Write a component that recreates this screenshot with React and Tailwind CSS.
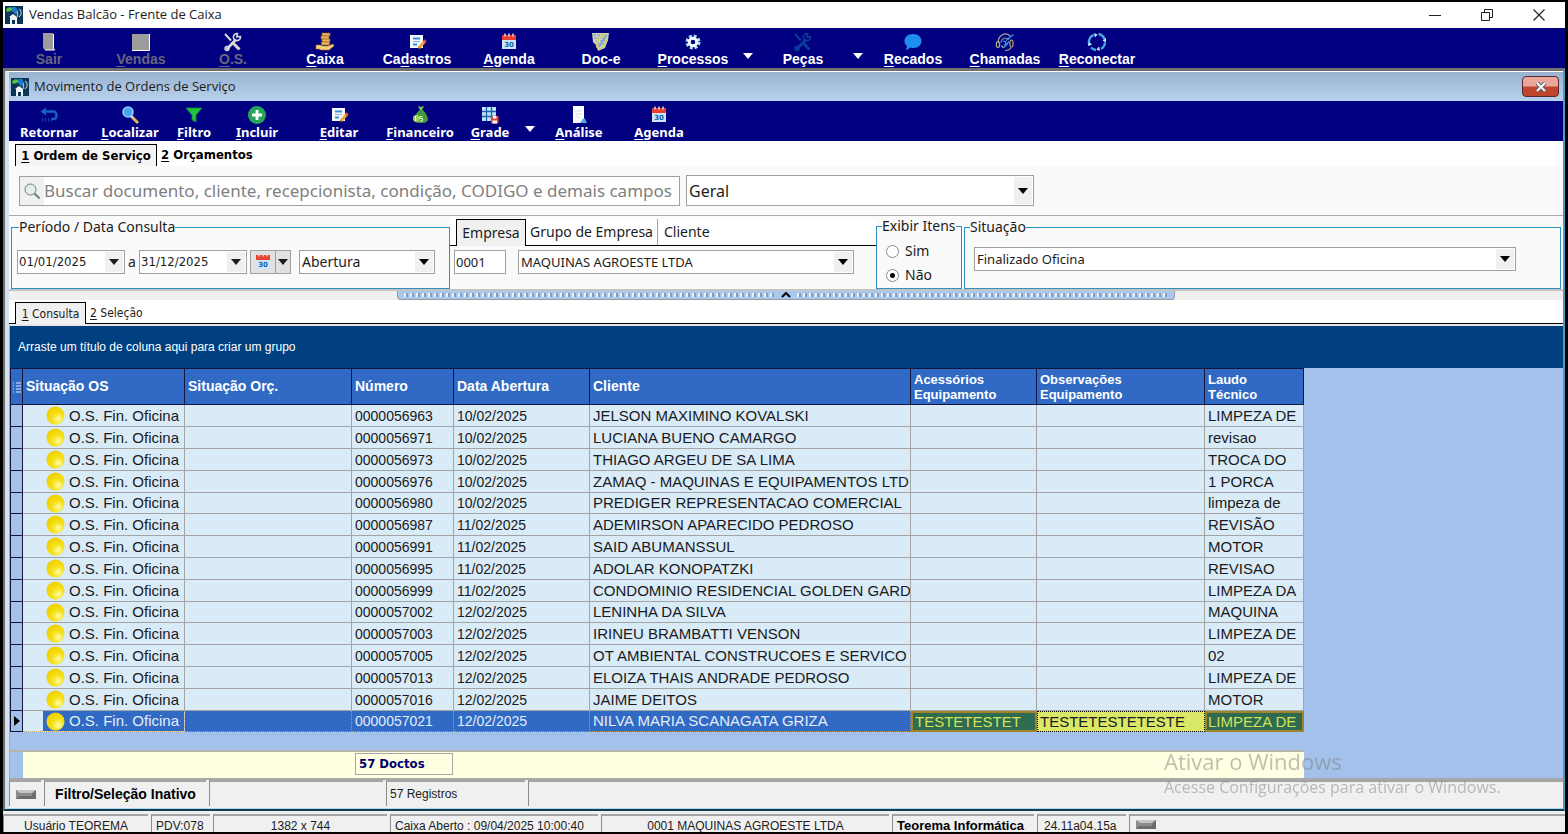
import { Fragment } from "react";

const navButtons = [
  { label: "Sair", icon: "door", width: "w-[92px]", disabled: true },
  { label: "&Vendas", icon: "board", width: "w-[92px]", disabled: true },
  { label: "&O.S.", icon: "toolsGray", width: "w-[92px]", disabled: true },
  { label: "&Caixa", icon: "coins", width: "w-[92px]" },
  { label: "Ca&dastros", icon: "edit", width: "w-[92px]" },
  { label: "&Agenda", icon: "calendar", width: "w-[92px]" },
  { label: "Doc-e", icon: "doc", width: "w-[92px]" },
  { label: "&Processos", icon: "gear", width: "w-[92px]", menu: true },
  { label: "Peças", icon: "toolsBlue", width: "w-[92px]", menu: true },
  { label: "&Recados", icon: "balloon", width: "w-[92px]" },
  { label: "&Chamadas", icon: "headset", width: "w-[92px]" },
  { label: "&Reconectar", icon: "sync", width: "w-[92px]" },
];

const orderButtons = [
  { label: "Retornar", icon: "back", width: "w-[80px]" },
  { label: "&Localizar", icon: "search", width: "w-[82px]" },
  { label: "&Filtro", icon: "filter", width: "w-[46px]" },
  { label: "&Incluir", icon: "plus", width: "w-[80px]" },
  { label: "&Editar", icon: "edit", width: "w-[84px]" },
  { label: "&Financeiro", icon: "money", width: "w-[78px]" },
  { label: "&Grade", icon: "grid", width: "w-[62px]", menu: true },
  { label: "&Análise", icon: "report", width: "w-[80px]" },
  { label: "&Agenda", icon: "calendar", width: "w-[80px]" },
];

const orders = [
  ["0000056963", "10/02/2025", "JELSON MAXIMINO KOVALSKI", "LIMPEZA DE"],
  ["0000056971", "10/02/2025", "LUCIANA BUENO CAMARGO", "revisao"],
  ["0000056973", "10/02/2025", "THIAGO ARGEU DE SA LIMA", "TROCA DO"],
  ["0000056976", "10/02/2025", "ZAMAQ - MAQUINAS E EQUIPAMENTOS LTD", "1 PORCA"],
  ["0000056980", "10/02/2025", "PREDIGER REPRESENTACAO COMERCIAL", "limpeza de"],
  ["0000056987", "11/02/2025", "ADEMIRSON APARECIDO PEDROSO", "REVISÃO"],
  ["0000056991", "11/02/2025", "SAID ABUMANSSUL", "MOTOR"],
  ["0000056995", "11/02/2025", "ADOLAR KONOPATZKI", "REVISAO"],
  ["0000056999", "11/02/2025", "CONDOMINIO RESIDENCIAL GOLDEN GARD", "LIMPEZA DA"],
  ["0000057002", "12/02/2025", "LENINHA DA SILVA", "MAQUINA"],
  ["0000057003", "12/02/2025", "IRINEU BRAMBATTI VENSON", "LIMPEZA DE"],
  ["0000057005", "12/02/2025", "OT AMBIENTAL CONSTRUCOES E SERVICO", "02"],
  ["0000057013", "12/02/2025", "ELOIZA THAIS ANDRADE PEDROSO", "LIMPEZA DE"],
  ["0000057016", "12/02/2025", "JAIME DEITOS", "MOTOR"],
  ["0000057021", "12/02/2025", "NILVA MARIA SCANAGATA GRIZA", "LIMPEZA DE"],
];

const tahoma = "font-['DejaVu_Sans_Condensed','DejaVu_Sans',sans-serif]";
const segoe = "font-['Open_Sans','Noto_Sans',sans-serif]";
const noto = "font-['Noto_Sans','Open_Sans',sans-serif]";
const msSans = "font-['Liberation_Sans',Arial,sans-serif]";

const tools = (
  <>
    <path d="M2 2 L8 8.5" strokeWidth="2" />
    <path d="M9 10 L16.5 17.5" strokeWidth="3" />
    <path d="M3.5 17.5 L13 7.5" strokeWidth="2.6" />
    <path d="M17.5 4.5 A3.6 3.6 0 1 1 14.5 1.5 L13.8 4.8 Z" strokeWidth="1.6" />
    <circle cx="4" cy="16.5" r="2" strokeWidth="1.4" />
  </>
);

const icons = {
  door: (
    <>
      <path d="M4 1h10v15l2 2H6l-2-2z" fill="#9c9c9c" />
      <path d="M14.500 2v14.500l1 1.500H6" stroke="#fff" fill="none" />
    </>
  ),
  board: (
    <>
      <rect x="1" y="2" width="17" height="16" fill="#9c9c9c" />
      <path d="M18.500 2v16.500H1" stroke="#fff" fill="none" />
    </>
  ),
  toolsGray: (
    <g stroke="#d8d8d8" fill="none">
      {tools}
    </g>
  ),
  toolsBlue: (
    <g stroke="#0a3c98" fill="none">
      {tools}
    </g>
  ),
  coins: (
    <>
      <g fill="#f2b45e" stroke="#8a5a1c" strokeWidth=".6">
        <rect x="7" y="1" width="8" height="3" />
        <rect x="6" y="4" width="8" height="3" />
        <rect x="7" y="7" width="8" height="3" />
        <rect x="6.500" y="10" width="8" height="3" />
      </g>
      <path
        d="M1 13h4l3 1h5l5-2 1 2-5 4H6l-2-1H1z"
        fill="#f7cf7a"
        stroke="#a87728"
        strokeWidth=".6"
      />
    </>
  ),
  edit: (
    <>
      <rect x="3" y="3" width="13" height="13" fill="#f4f8fd" />
      <path d="M6 6.500h7M6 12.500h4" stroke="#2c8fe0" strokeWidth="2" />
      <path d="M6 9.500h7" stroke="#8fb4dc" />
      <path d="M17.500 9.500 L12 16" stroke="#f0a63a" strokeWidth="3" />
      <path d="M11 17.500l.5-2.500 2 1.500z" fill="#5b4a3a" />
      <path d="M18.500 8.300 l-1.500 1.800" stroke="#e2574c" strokeWidth="3" />
    </>
  ),
  calendar: (
    <>
      <rect x="3" y="3" width="14" height="14" fill="#cfe6fa" />
      <rect x="3" y="3" width="14" height="5" fill="#e8412f" />
      <path d="M6 1.500v3M10 1.500v3M14 1.500v3" stroke="#d9d9d9" strokeWidth="1.500" />
      <text
        x="10"
        y="14.500"
        textAnchor="middle"
        fontSize="7"
        fontWeight="bold"
        fontFamily="DejaVu Sans, sans-serif"
        fill="#0b5fae"
      >
        30
      </text>
    </>
  ),
  doc: (
    <>
      <path d="M1 1h17l-1 7-3 8-7 3-1-5-4-4z" fill="#c9d2c4" />
      <path d="M2 3h14M3 6h12M5 9h9M6.500 12h7" stroke="#8498a4" strokeDasharray="3 1" />
      <ellipse
        cx="11"
        cy="9.500"
        rx="4"
        ry="8"
        transform="rotate(32 11 9.500)"
        fill="none"
        stroke="#d8cf62"
        strokeWidth="1.500"
      />
      <path d="M15.500 3 L8 15" stroke="#6fa9dc" strokeWidth="1.600" />
    </>
  ),
  gear: (
    <>
      <circle cx="10" cy="10" r="5.500" fill="none" stroke="#aee2f2" strokeWidth="4" strokeDasharray="2.600 1.720" />
      <circle cx="10" cy="10" r="3.800" fill="none" stroke="#f2fdff" strokeWidth="3" />
    </>
  ),
  balloon: (
    <path d="M10 2c5 0 8.500 2.800 8.500 7s-3.500 7-8 7c-1 0-2 0-3-.5L3 18.500l1-4.500C2.500 13 1.500 11 1.500 9 1.500 4.800 5 2 10 2z" fill="#1e8ff0" />
  ),
  headset: (
    <g fill="none" strokeWidth="1.200">
      <path d="M3.500 11a7 7.500 0 0 1 12-6.500" stroke="#a8a69a" />
      <path d="M6 11a4.500 5 0 0 1 8-3" stroke="#6b7690" />
      <ellipse cx="3" cy="12.500" rx="1.600" ry="3" stroke="#b9b18a" />
      <ellipse cx="16.500" cy="11.500" rx="1.600" ry="3.500" stroke="#b9a56a" />
      <path d="M16 15.500c-1 2-3 3-6 3" stroke="#a9a07a" />
      <path d="M18.500 2.500 L11 8.500M8 9l3 1-1 3 3-1M9 15.500l5-6" stroke="#3f9fdb" />
      <path d="M6.500 13.500l2 2.500" stroke="#c8c8b0" />
    </g>
  ),
  sync: (
    <g fill="none" strokeWidth="2.400">
      <path d="M2.600 13.500a8 8 0 0 1 4-10.600" stroke="#4aa6e4" />
      <path d="M11.500 2a8 8 0 0 1 6 5" stroke="#4aa6e4" />
      <path d="M18 10.500a8 8 0 0 1-4 6.400" stroke="#4aa6e4" />
      <path d="M9 18a8 8 0 0 1-5-2.500" stroke="#4aa6e4" />
      <path d="M7 1l3.500 1.500-2.500 3z" fill="#c9ecff" />
      <path d="M19 6v4.500l-3.500-2z" fill="#c9ecff" />
      <path d="M13 19l-3.500-1.500 2.500-3z" fill="#c9ecff" />
      <path d="M1 14l1-4 3 2.500z" fill="#c9ecff" />
    </g>
  ),
  back: (
    <>
      <path d="M4.500 6.500h9.500c2.500 0 3.500 2 3.500 4s-1 3.500-3.500 3.500h-2" fill="none" stroke="#1463bd" strokeWidth="2.400" />
      <path d="M7 2.500v8L1.500 6.500z" fill="#1463bd" />
      <path d="M3.500 13v3.500M6.500 13v3.500M9.500 13v3.500M12.500 13v3.500" stroke="#0c4aa0" strokeWidth="1.200" />
    </>
  ),
  search: (
    <>
      <path d="M11.500 11.500 L18 18" stroke="#e0b36a" strokeWidth="3" />
      <path d="M10.500 10.500l2 2" stroke="#cfd6dd" strokeWidth="2.500" />
      <circle cx="8" cy="7" r="5" fill="#4aa3f2" stroke="#8ecbff" strokeWidth="1.600" />
    </>
  ),
  filter: <path d="M2 3h16l-6 7v7l-4-2v-5z" fill="#1fc43a" stroke="#0c8a3c" strokeWidth=".8" />,
  plus: (
    <>
      <circle cx="10" cy="10" r="9" fill="#27a45a" />
      <path d="M10 5v10M5 10h10" stroke="#fff" strokeWidth="2.800" />
    </>
  ),
  money: (
    <>
      <path d="M8 1l2.500 1L14 1l-2 4h-2z" fill="#7cc34a" />
      <path d="M10 5h3c3 3 5 7 5 9 0 2.500-2 4-7 4s-7-1.500-7-4c0-3 3-7 6-9z" fill="#3f9b3a" />
      <ellipse cx="6.500" cy="13.500" rx="3.500" ry="3.500" fill="#9bcf5c" />
      <path d="M5.500 11v5M12.500 11.500H10v2h2.500v2.500H10M4 11.500h1.500" stroke="#e9f6c8" fill="none" />
    </>
  ),
  grid: (
    <>
      <rect x="2" y="2" width="14" height="14" fill="#bfe4fb" />
      <path d="M2 6.500h14M2 11.500h14M6.500 2v14M11.500 2v14" stroke="#1c62ad" strokeWidth="1.300" />
      <path d="M11 11h7.500v7.500H11z" fill="#e0402c" />
      <path d="M13 11h3.500v2.500H13zM12.500 15.500h4.500v3h-4.500z" fill="#fff" />
    </>
  ),
  report: (
    <>
      <path d="M4 1h11v17H4z" fill="#fff" />
      <path d="M6 6h7M6 9h7M6 12h5" stroke="#d5dde6" />
      <path d="M11 18l2.500-4 2-1 2.500 5z" fill="#59a9e0" />
    </>
  ),
};

function Icon({ name, className = "size-5" }) {
  return (
    <svg viewBox="0 0 20 20" className={className} aria-hidden="true">
      {icons[name]}
    </svg>
  );
}

function AppLogo() {
  return (
    <svg viewBox="0 0 18 18" className="size-[18px] shrink-0" aria-hidden="true">
      <rect width="18" height="18" fill="#0b3556" />
      <path d="M1 3l4-2 3 2-2 2-4 1z" fill="#5ac43a" />
      <path d="M7 1h4l2 4-2 4-4-4z" fill="#1f7ac8" />
      <path d="M4 11l4-3 4 3v7h-2v-4H7v4H5v-7z" fill="#eef3f7" />
      <path d="M14 3c3 1.500 3 6 0 8M12.500 5v6" stroke="#9db8cc" strokeWidth="1.300" fill="none" />
    </svg>
  );
}

// "&" marks the shortcut letter
function Accel({ text }) {
  const at = text.indexOf("&");
  if (at < 0) return text;
  return (
    <>
      {text.slice(0, at)}
      <span className="underline underline-offset-2">{text[at + 1]}</span>
      {text.slice(at + 2)}
    </>
  );
}

function Caret({ className = "" }) {
  return (
    <svg viewBox="0 0 10 6" className={`h-1.5 w-2.5 ${className}`} aria-hidden="true">
      <path d="M0 0h10L5 6z" fill="currentColor" />
    </svg>
  );
}

function Toolbar({ items, label, className }) {
  return (
    <nav aria-label={label} className={`flex h-10 shrink-0 bg-[#000080] font-bold text-white ${className}`}>
      {items.map((item) => (
        <Fragment key={item.label}>
          <button
            type="button"
            disabled={item.disabled}
            className={`flex shrink-0 flex-col items-center pt-1 leading-4 whitespace-nowrap disabled:text-[#66667e] ${item.width}`}
          >
            <Icon name={item.icon} />
            <span className="-mt-px">
              <Accel text={item.label} />
            </span>
          </button>
          {item.menu && (
            <button type="button" aria-label={`Mais ${item.label.replace("&", "")}`} className="flex w-[18px] shrink-0 items-center justify-center pt-5">
              <Caret className="mb-1" />
            </button>
          )}
        </Fragment>
      ))}
    </nav>
  );
}

function Combo({ label, value, className }) {
  return (
    <div className={`relative border border-[#a0a0a0] bg-white text-[#1c1c1c] ${className}`}>
      <select aria-label={label} defaultValue={value} className="block size-full appearance-none truncate pl-0.5 outline-none">
        <option>{value}</option>
      </select>
      <span className="pointer-events-none absolute inset-y-px right-px flex w-[18px] items-center justify-center bg-[#f0f0f0] text-black">
        <Caret />
      </span>
    </div>
  );
}

function DateField({ label, value }) {
  return (
    <div className="flex h-6 w-[108px] border border-[#a0a0a0] bg-white p-px">
      <input aria-label={label} defaultValue={value} className={`min-w-0 flex-1 text-[13px] outline-none ${tahoma}`} />
      <button type="button" aria-label={`Abrir ${label}`} className="flex w-[18px] items-center justify-center bg-[#f0f0f0]">
        <Caret />
      </button>
    </div>
  );
}

function Ball() {
  return (
    <svg viewBox="0 0 20 20" className="size-[19px] shrink-0" aria-hidden="true">
      <defs>
        <radialGradient id="ball" cx=".65" cy=".7" r=".7">
          <stop offset="0" stopColor="#fffbb0" />
          <stop offset=".45" stopColor="#f6e21a" />
          <stop offset="1" stopColor="#f0cf00" />
        </radialGradient>
      </defs>
      <circle cx="10" cy="10" r="9.500" fill="url(#ball)" />
    </svg>
  );
}

function FilterPanel() {
  return (
    <section className={`flex h-[74px] border-t border-[#a8a8a8] bg-[#fafafa] pt-[3px] pl-0.5 text-sm text-[#1c1c1c] ${noto}`}>
      <fieldset className="h-[70px] w-[439px] shrink-0 border border-[#2f8fc0] pl-[5px]">
        <legend className="ml-0.5 leading-4">Período / Data Consulta</legend>
        <div className="flex items-center pt-[15px]">
          <DateField label="Data inicial" value="01/01/2025" />
          <span className="w-3.5 text-center">a</span>
          <DateField label="Data final" value="31/12/2025" />
          <div className="ml-[3px] flex h-6 w-[41px] border border-[#a0a0a0] bg-[#e1e1e1]">
            <button type="button" aria-label="Calendário" className="flex flex-1 items-center justify-center border-r border-[#a0a0a0]">
              <Icon name="calendar" />
            </button>
            <button type="button" aria-label="Opções de período" className="flex w-3.5 items-center justify-center">
              <Caret className="w-2" />
            </button>
          </div>
          <Combo label="Tipo de data" value="Abertura" className="ml-2 h-6 w-[136px]" />
        </div>
      </fieldset>

      <div className="flex w-[426px] shrink-0 flex-col">
        <div role="tablist" className="flex h-[27px] shrink-0 border-b border-black bg-white pl-1.5">
          <button type="button" role="tab" aria-selected="true" className="-mb-px w-[70px] border border-b-0 border-black bg-[#f0f0f0]">
            Empresa
          </button>
          <button type="button" role="tab" className="w-[132px] border-r border-[#a0a0a0]">
            Grupo de Empresa
          </button>
          <button type="button" role="tab" className="px-1.5">
            Cliente
          </button>
        </div>
        <div className={`flex gap-3 pt-1 pl-1 text-[13px] ${noto}`}>
          <input aria-label="Código da empresa" defaultValue="0001" className="h-6 w-[52px] border border-[#a0a0a0] bg-white pl-px outline-none" />
          <Combo label="Empresa" value="MAQUINAS AGROESTE LTDA" className="h-6 w-[336px]" />
        </div>
      </div>

      <fieldset className="h-[70px] w-[86px] shrink-0 border border-[#2f8fc0] pl-[9px]">
        <legend className="-ml-1 leading-[14px] whitespace-nowrap">Exibir Itens</legend>
        <div className="flex flex-col gap-1 pt-2">
          {["Sim", "Não"].map((option) => (
            <label key={option} className="flex items-center gap-1.5 leading-5">
              <input
                type="radio"
                name="exibir"
                defaultChecked={option === "Não"}
                className="size-[13px] appearance-none rounded-full border border-[#8a8a8a] bg-white checked:bg-[radial-gradient(circle,#000_0_2px,#fff_3px)]"
              />
              {option}
            </label>
          ))}
        </div>
      </fieldset>

      <fieldset className="mr-0.5 ml-0.5 h-[70px] min-w-0 flex-1 border border-[#2f8fc0] pl-[9px]">
        <legend className="-ml-1 leading-4">Situação</legend>
        <Combo label="Situação" value="Finalizado Oficina" className={`mt-3 mr-11 h-6 text-[13px] ${noto}`} />
      </fieldset>
    </section>
  );
}

function Splitter() {
  return (
    <div className="flex h-[11px] shrink-0 justify-center border-t-2 border-[#c4c4c4] bg-[#f0f0f0]">
      <div className="flex w-[778px] rounded-b border border-t-0 border-[#9a9a9a] bg-[#a8c8ee]">
        <div className="my-0.5 ml-1.5 flex-1 bg-[repeating-linear-gradient(90deg,#e8f2fc_0_2px,#8a9db4_2px_4px,#a8c8ee_4px_6px)]" />
        <button type="button" aria-label="Recolher filtros" className="flex w-[22px] items-center justify-center">
          <svg viewBox="0 0 10 6" className="h-1.5 w-2.5" aria-hidden="true">
            <path d="M1 5l4-4 4 4" fill="none" stroke="#000" strokeWidth="2" />
          </svg>
        </button>
        <div className="my-0.5 mr-1.5 flex-1 bg-[repeating-linear-gradient(90deg,#e8f2fc_0_2px,#8a9db4_2px_4px,#a8c8ee_4px_6px)]" />
      </div>
    </div>
  );
}

const headCell = "border-r border-b border-[#14143c] px-[3px] text-left align-middle leading-[15px]";

function OrdersTable() {
  return (
    <table className={`w-[1294px] table-fixed border-separate border-spacing-0 bg-[#d9ebf7] ${msSans}`}>
      <colgroup>
        <col className="w-[13px]" />
        <col className="w-[162px]" />
        <col className="w-[167px]" />
        <col className="w-[102px]" />
        <col className="w-[136px]" />
        <col className="w-[321px]" />
        <col className="w-[126px]" />
        <col className="w-[168px]" />
        <col className="w-[99px]" />
      </colgroup>
      <thead>
        <tr className="h-[37px] bg-[#316ac5] text-sm font-bold text-white">
          <th aria-label="Indicador" className="border border-[#14143c] p-0">
            <svg viewBox="0 0 12 12" className="mx-auto size-3" aria-hidden="true">
              <path d="M2 2h1M2 5h1M2 8h1M2 11h1M5 2h5M5 5h5M5 8h5M5 11h5" stroke="#d9ebf7" />
            </svg>
          </th>
          {["Situação OS", "Situação Orç.", "Número", "Data Abertura", "Cliente"].map((title) => (
            <th key={title} className={`border-t ${headCell}`}>
              {title}
            </th>
          ))}
          {[
            ["Acessórios", "Equipamento"],
            ["Observações", "Equipamento"],
            ["Laudo", "Técnico"],
          ].map(([first, second]) => (
            <th key={first} className={`border-t text-[13px] ${headCell}`}>
              {first}
              <br />
              {second}
            </th>
          ))}
        </tr>
      </thead>
      <tbody>
        {orders.map(([number, date, client, report], i) => {
          const selected = i === orders.length - 1;
          const cell = `border-r border-b overflow-hidden whitespace-nowrap p-0 pl-[3px] ${
            selected ? "border-[#c0a060] border-dotted bg-[#316ac5] text-[#e4edf8]" : "border-[#a4a4a4]"
          }`;
          return (
            <tr key={number} className={`text-[15px] leading-5 text-[#1a1a22] ${i % 5 === 4 ? "h-[21px]" : "h-[22px]"}`}>
              <td className="border border-t-0 border-[#14143c] bg-[#a3c1ea] p-0">
                {selected && (
                  <svg viewBox="0 0 6 10" className="mx-auto h-2.5 w-1.5" aria-hidden="true">
                    <path d="M0 0v10l6-5z" />
                  </svg>
                )}
              </td>
              <td className={`border-r border-b p-0 ${selected ? "border-[#c0a060] border-dotted text-[#e4edf8]" : "border-[#a4a4a4]"}`}>
                <div className={`ml-5 flex h-5 items-center gap-1 overflow-hidden pl-[3px] whitespace-nowrap ${selected ? "bg-[#316ac5]" : ""}`}>
                  <Ball />
                  O.S. Fin. Oficina
                </div>
              </td>
              <td className={cell}></td>
              <td className={`text-sm ${cell}`}>{number}</td>
              <td className={`text-sm ${cell}`}>{date}</td>
              <td className={cell}>{client}</td>
              {selected ? (
                <>
                  <td className="overflow-hidden border-2 border-[#a08428] bg-[#2f6b50] p-0 pl-0.5 leading-[17px] whitespace-nowrap text-[#d4e25a]">TESTETESTET</td>
                  <td className="overflow-hidden border border-dotted border-black bg-[#dbe766] p-0 pl-0.5 leading-[17px] whitespace-nowrap">TESTETESTETESTE</td>
                  <td className="overflow-hidden border-2 border-[#a08428] bg-[#2f6b50] p-0 pl-px leading-[17px] whitespace-nowrap text-[#d4e25a]">{report}</td>
                </>
              ) : (
                <>
                  <td className={cell}></td>
                  <td className={cell}></td>
                  <td className={cell}>{report}</td>
                </>
              )}
            </tr>
          );
        })}
      </tbody>
    </table>
  );
}

const panel = "shrink-0 border-t-2 border-l border-t-[#a4a4a4] border-l-[#8c8c8c] whitespace-nowrap";

function Led() {
  return (
    <svg viewBox="0 0 20 9" className="h-[9px] w-5" aria-hidden="true">
      <path d="M0 0h20v9H0z" fill="#8c8c8c" />
      <path d="M0 0h20l-4 3H4z" fill="#c4c4c4" />
      <path d="M0 9h20V0l-4 4v2H3z" fill="#6c6c6c" />
    </svg>
  );
}

export default function App() {
  return (
    <div className="flex h-screen min-h-[600px] flex-col overflow-hidden border-x-[3px] border-y-2 border-black bg-[#f0f0f0]">
      <header className={`flex h-[26px] shrink-0 items-center bg-white pl-0.5 text-[13px] text-[#1c1c1c] ${segoe}`}>
        <AppLogo />
        <h1 className="ml-1.5 flex-1">Vendas Balcão - Frente de Caixa</h1>
        <button type="button" aria-label="Minimizar" className="flex w-[52px] justify-center">
          <svg viewBox="0 0 12 12" className="size-3">
            <path d="M0 6.500h12" stroke="#222" />
          </svg>
        </button>
        <button type="button" aria-label="Restaurar" className="flex w-[52px] justify-center">
          <svg viewBox="0 0 12 12" className="size-3" fill="none" stroke="#222">
            <path d="M.5 3.500h8v8h-8zM3.500 3.500v-3h8v8h-3" />
          </svg>
        </button>
        <button type="button" aria-label="Fechar" className="flex w-[52px] justify-center">
          <svg viewBox="0 0 12 12" className="size-3" stroke="#222" strokeWidth="1.200">
            <path d="M.5.5l11 11M11.500.5l-11 11" />
          </svg>
        </button>
      </header>

      <Toolbar items={navButtons} label="Menu principal" className={`text-sm ${msSans}`} />

      <main className="flex min-h-0 flex-1 flex-col border-t-[3px] border-r-2 border-b-2 border-l-2 border-t-[#707070] border-r-[#4a9cc4] border-b-[#123c50] border-l-[#707070]">
        <div className="flex min-h-0 flex-1 flex-col border-t border-b border-l-4 border-t-white border-b-[#a8dcec] border-l-[#d4e2f2]">
          <div className={`flex h-[29px] shrink-0 items-center bg-linear-to-b from-[#98b2d0] to-[#b9d1ec] pr-1 pl-0.5 text-[13px] text-[#1c1c1c] ${segoe}`}>
            <AppLogo />
            <h2 className="ml-[5px] flex-1">Movimento de Ordens de Serviço</h2>
            <button
              type="button"
              aria-label="Fechar janela"
              className="flex h-[21px] w-[37px] items-center justify-center rounded-sm border border-[#5a2a34] bg-linear-to-b from-[#eaa79c] from-45% to-[#c0452e] to-55%"
            >
              <svg viewBox="0 0 12 10" className="h-2.5 w-3">
                <path d="M2 1l8 8M10 1l-8 8" stroke="#5a5060" strokeWidth="4" />
                <path d="M2 1l8 8M10 1l-8 8" stroke="#f4f4f4" strokeWidth="2.400" />
              </svg>
            </button>
          </div>

          <Toolbar items={orderButtons} label="Ordens de serviço" className={`text-[13px] ${noto}`} />

          <div role="tablist" className={`flex h-[25px] shrink-0 bg-white pt-[3px] pl-1.5 text-[13px] font-bold text-black ${tahoma}`}>
            <button type="button" role="tab" aria-selected="true" className="w-[142px] border border-b-0 border-black bg-[#f4f4f4]">
              <Accel text="&1 Ordem de Serviço" />
            </button>
            <button type="button" role="tab" className="px-1">
              <Accel text="&2 Orçamentos" />
            </button>
          </div>

          <div className={`flex h-[49px] shrink-0 items-center gap-1.5 bg-[#fafafa] pl-2.5 ${noto}`}>
            <label className="flex h-[30px] w-[661px] items-center border border-[#a0a0a0] bg-white">
              <span className="flex h-full w-6 items-center justify-center bg-[#f0f0f0]">
                <svg viewBox="0 0 16 16" className="size-4" fill="none" stroke="#6c7c7c" aria-hidden="true">
                  <circle cx="6.500" cy="6.500" r="5.500" fill="#e4eeee" />
                  <path d="M10.500 10.500l5 5" strokeWidth="2" />
                </svg>
              </span>
              <input
                aria-label="Buscar"
                placeholder="Buscar documento, cliente, recepcionista, condição, CODIGO e demais campos"
                className="min-w-0 flex-1 text-[17px] outline-none placeholder:text-[#808080]"
              />
            </label>
            <Combo label="Filtro da busca" value="Geral" className="h-[31px] w-[348px] text-base" />
          </div>

          <FilterPanel />
          <Splitter />

          <div role="tablist" className={`flex h-6 shrink-0 border-b border-black bg-white pt-0.5 pl-1.5 text-xs text-[#1c1c1c] ${tahoma}`}>
            <button type="button" role="tab" aria-selected="true" className="-mb-px w-[71px] border border-b-0 border-black bg-[#f0f0f0]">
              <Accel text="&1 Consulta" />
            </button>
            <button type="button" role="tab" className="px-1">
              <Accel text="&2 Seleção" />
            </button>
          </div>

          <div className="flex min-h-0 flex-1 flex-col border-t-2 border-b-2 border-l border-t-[#e4e8ec] border-b-[#a8a8a8] border-l-[#a8a8a8] bg-[#a3c1ea]">
            <p className={`flex h-[42px] shrink-0 items-center bg-[#004080] pl-2 text-xs text-white ${msSans}`}>
              Arraste um título de coluna aqui para criar um grupo
            </p>
            <OrdersTable />
            <div className="flex-1" />
            <div className="flex h-7 w-[1294px] shrink-0 border-t-2 border-[#b4b4a8] bg-[#ffffe1] text-[#000070]">
              <div className="w-[13px] bg-[#a3c1ea]" />
              <output className={`mt-px ml-[332px] h-[22px] w-[98px] border border-[#a8a8a8] pl-[3px] text-[13px] leading-5 font-bold ${tahoma}`}>
                57 Doctos
              </output>
            </div>
          </div>

          <footer className={`flex h-7 shrink-0 gap-[3px] bg-[#f0f0f0] pb-0.5 text-xs leading-6 text-[#1c1c1c] ${msSans}`}>
            <div className={`flex w-8 items-center justify-center ${panel}`}>
              <Led />
            </div>
            <div className={`w-[162px] text-center text-sm leading-6 font-bold text-black ${panel}`}>Filtro/Seleção Inativo</div>
            <div className={`w-[174px] ${panel}`} />
            <div className={`w-[139px] pl-[3px] ${panel}`}>57 Registros</div>
            <div className={`flex-1 ${panel}`} />
          </footer>
        </div>
      </main>

      <footer className={`flex h-[21px] shrink-0 gap-[3px] overflow-hidden pt-[3px] text-xs leading-5 text-[#1c1c1c] ${msSans}`}>
        <div className={`w-[145px] text-center ${panel}`}>Usuário TEOREMA</div>
        <div className={`w-[59px] pl-1 ${panel}`}>PDV:078</div>
        <div className={`w-[174px] text-center ${panel}`}>1382 x 744</div>
        <div className={`w-[208px] pl-1 ${panel}`}>Caixa Aberto : 09/04/2025 10:00:40</div>
        <div className={`w-[288px] text-center ${panel}`}>0001 MAQUINAS AGROESTE LTDA</div>
        <div className={`w-[142px] pl-1 text-[13px] leading-5 font-bold text-black ${panel}`}>Teorema Informática</div>
        <div className={`w-[89px] pl-1.5 ${panel}`}>24.11a04.15a</div>
        <div className={`flex flex-1 items-center pl-1.5 ${panel}`}>
          <Led />
        </div>
      </footer>

      {/* activation notice floats over everything */}
      <aside className={`pointer-events-none fixed right-[59px] bottom-[35px] w-[345px] whitespace-nowrap text-[#808080]/50 ${segoe}`}>
        <p className="text-[22px] leading-7">Ativar o Windows</p>
        <p className="text-base leading-6">Acesse Configurações para ativar o Windows.</p>
      </aside>
    </div>
  );
}
